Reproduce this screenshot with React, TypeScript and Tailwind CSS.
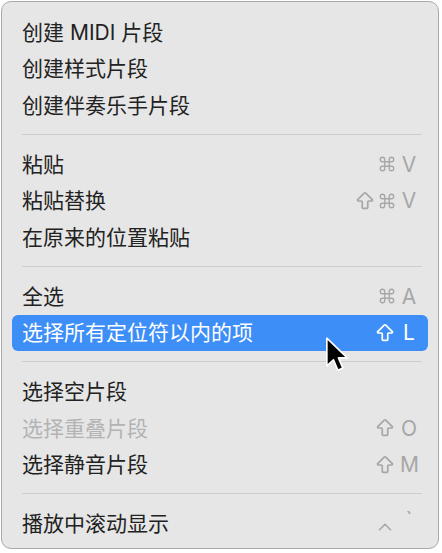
import { Command, ArrowBigUp, ChevronUp } from "lucide-react";

type Item = {
  label: string;
  keys?: ("cmd" | "shift" | "ctrl")[];
  letter?: string;
  active?: boolean;
  disabled?: boolean;
};

const groups: Item[][] = [
  [
    { label: "创建 MIDI 片段" },
    { label: "创建样式片段" },
    { label: "创建伴奏乐手片段" },
  ],
  [
    { label: "粘贴", keys: ["cmd"], letter: "V" },
    { label: "粘贴替换", keys: ["shift", "cmd"], letter: "V" },
    { label: "在原来的位置粘贴" },
  ],
  [
    { label: "全选", keys: ["cmd"], letter: "A" },
    { label: "选择所有定位符以内的项", keys: ["shift"], letter: "L", active: true },
  ],
  [
    { label: "选择空片段" },
    { label: "选择重叠片段", keys: ["shift"], letter: "O", disabled: true },
    { label: "选择静音片段", keys: ["shift"], letter: "M" },
  ],
  [{ label: "播放中滚动显示", keys: ["ctrl"], letter: "`" }],
];

function KeyIcon({ k }: { k: "cmd" | "shift" | "ctrl" }) {
  if (k === "cmd") return <Command size={18} strokeWidth={1.8} />;
  if (k === "shift") return <ArrowBigUp size={22} strokeWidth={1.9} />;
  return <ChevronUp size={22} strokeWidth={1.8} className="mt-[6px]" />;
}

function Row({ item }: { item: Item }) {
  const text = item.active
    ? "text-white"
    : item.disabled
      ? "text-[#b3b3b3]"
      : "text-[#222222]";
  const shortcut = item.active ? "text-white" : "text-[#a7a7a7]";
  return (
    <div
      className={`mx-[10px] flex h-[36.5px] items-center justify-between rounded-[6px] pl-[10px] pr-[10px] ${
        item.active ? "bg-[#3d8ef6]" : ""
      }`}
    >
      <span className={`text-[21px] leading-none ${text}`}>{item.label}</span>
      {item.letter && (
        <span className={`flex items-center gap-[4px] ${shortcut}`}>
          <span className="flex items-center gap-[2px]">
            {item.keys?.map((k, i) => (
              <KeyIcon key={i} k={k} />
            ))}
          </span>
          <span
            className={`w-[18px] text-center text-[21px] leading-none ${
              item.letter === "`" ? "-mt-[8px]" : ""
            }`}
          >
            {item.letter}
          </span>
        </span>
      )}
    </div>
  );
}

export default function App() {
  return (
    <div
      className="relative h-[553px] w-[442px] bg-white pl-[1px] pt-[1px]"
      style={{ fontFamily: "Inter, 'Noto Sans CJK SC', sans-serif" }}
    >
      <div className="h-[548px] w-[438px] rounded-[10px] border border-[#a9a9a9] bg-[#e6e6e6] pt-[12px]">
        {groups.map((g, gi) => (
          <div key={gi}>
            {gi > 0 && (
              <div className="h-[22.5px] pt-[10px]">
                <div className="ml-[20px] mr-[16px] h-px bg-[#cdcdcd]" />
              </div>
            )}
            {g.map((item) => (
              <Row key={item.label} item={item} />
            ))}
          </div>
        ))}
      </div>

      {/* pointer */}
      <svg
        className="absolute left-[323px] top-[336px]"
        width="32"
        height="42"
        viewBox="0 0 28 38"
      >
        <path
          d="M3 2 L3 27 L9 21.5 L13 31 L17.5 29 L13.5 19.8 L21.5 19.8 Z"
          fill="#000"
          stroke="#fff"
          strokeWidth="1.5"
          strokeLinejoin="round"
        />
      </svg>
    </div>
  );
}
